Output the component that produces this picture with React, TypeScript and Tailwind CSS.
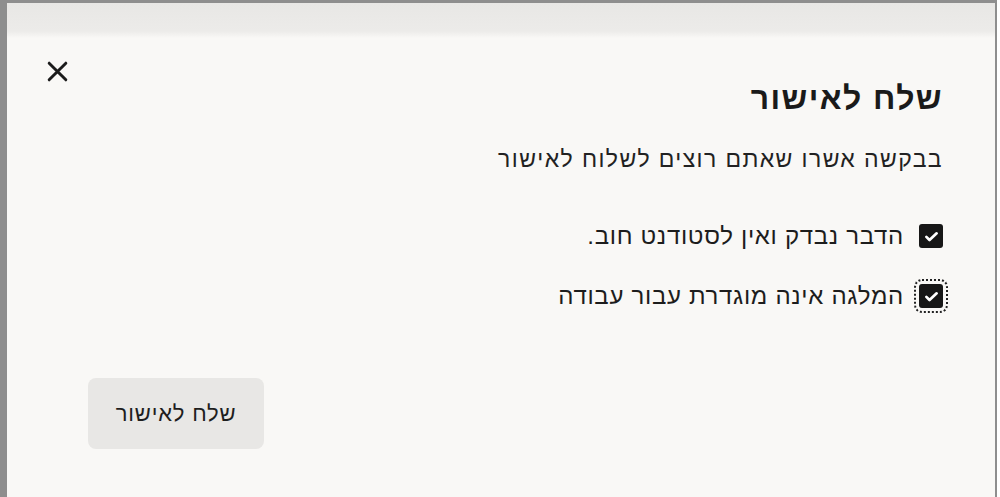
import { useState } from "react";

const items = [
  { id: "checked", label: "הדבר נבדק ואין לסטודנט חוב." },
  { id: "work", label: "המלגה אינה מוגדרת עבור עבודה" },
];

function CheckIcon() {
  return (
    <svg viewBox="0 0 24 24" className="h-[19px] w-[19px]" fill="none" stroke="white" strokeWidth={3.4} strokeLinecap="round" strokeLinejoin="round">
      <path d="M5.5 12.5l4 4L18.5 8" />
    </svg>
  );
}

export default function App() {
  const [checked, setChecked] = useState<Record<string, boolean>>({ checked: true, work: true });

  return (
    <div className="h-[497px] w-[1000px] overflow-hidden bg-white" style={{ fontFamily: '"Liberation Sans", Arial, sans-serif' }}>
      <div dir="rtl" className="relative flex h-full w-[997px] flex-col border-l-[7px] border-r-2 border-t-[3px] border-[#8e8e8e] bg-[#f9f8f6]">
        <div className="h-[35px] w-full bg-[linear-gradient(180deg,#e8e7e5_0%,#ecebe9_80%,#f9f8f6_100%)]" />

        <button
          aria-label="סגור"
          className="absolute left-[36px] top-[54px] flex h-[28px] w-[28px] items-center justify-center text-[#1b1b1b]"
        >
          <svg viewBox="0 0 24 24" className="h-[25px] w-[25px]" fill="none" stroke="currentColor" strokeWidth={2.8} strokeLinecap="round">
            <path d="M4 4l16 16M20 4L4 20" />
          </svg>
        </button>

        <div className="flex flex-col pr-[52px] pt-[42px] text-[#1a1a1a]">
          <h2 className="text-[32px] font-bold leading-[36px] tracking-[1.4px]">שלח לאישור</h2>
          <p className="mt-[29px] text-[23px] leading-[28px] tracking-[1.4px] text-[#222]">בבקשה אשרו שאתם רוצים לשלוח לאישור</p>

          <div className="mt-[49px] flex flex-col gap-[32px]">
            {items.map((item, i) => (
              <label key={item.id} className="flex cursor-pointer items-center gap-[15px] text-[24px] leading-[28px] tracking-[0.7px] text-[#1d1d1d]">
                <span
                  className={`flex h-[24px] w-[24px] shrink-0 items-center justify-center rounded-[3px] bg-[#171717] ${
                    i === 1 ? "outline-2 outline-offset-[3px] outline-dotted outline-[#222]" : ""
                  }`}
                  onClick={() => setChecked((prev) => ({ ...prev, [item.id]: !prev[item.id] }))}
                >
                  {checked[item.id] && <CheckIcon />}
                </span>
                <span>{item.label}</span>
              </label>
            ))}
          </div>
        </div>

        <div className="mt-[68px] flex justify-end pl-[81px]">
          <button className="flex h-[71px] w-[176px] items-center justify-center rounded-[8px] bg-[#e8e7e5] text-[22px] tracking-[0.8px] text-[#1e1e1e]">
            שלח לאישור
          </button>
        </div>
      </div>
    </div>
  );
}
